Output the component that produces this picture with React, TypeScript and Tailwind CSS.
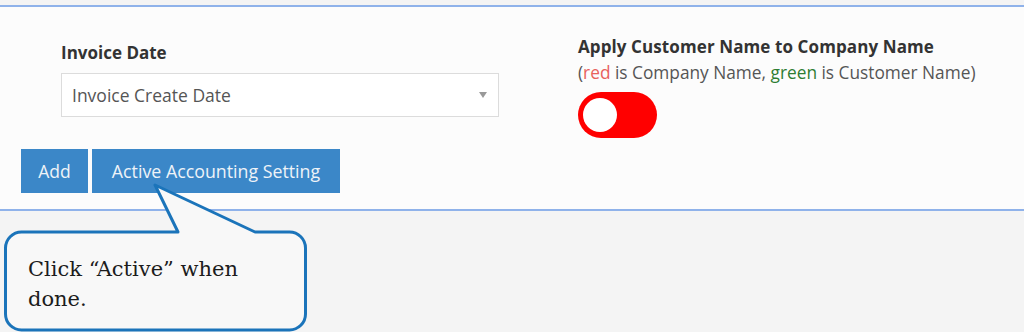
import React from 'react';

const ui = { fontFamily: '"Open Sans", "Noto Sans", Arial, sans-serif' };
const serif = { fontFamily: '"DejaVu Serif", "Liberation Serif", serif' };

const Callout: React.FC = () => (
  <div className="absolute left-0 top-[180px] h-[160px] w-[320px]">
    <svg width="320" height="160" viewBox="0 0 320 160" className="absolute inset-0">
      <path
        d="M 21.5 52 L 178 52 L 155 5 L 255 52 L 289.5 52 A 16 16 0 0 1 305.5 68 L 305.5 134 A 16 16 0 0 1 289.5 150 L 21.5 150 A 16 16 0 0 1 5.5 134 L 5.5 68 A 16 16 0 0 1 21.5 52 Z"
        fill="#f8f8f8"
        stroke="#1b74ba"
        strokeWidth="3"
        strokeLinejoin="round"
      />
    </svg>
    <p
      className="absolute left-[28px] top-[74px] w-[240px] text-[21px] leading-[30px] text-[#1c1c1c]"
      style={serif}
    >
      Click “Active” when done.
    </p>
  </div>
);

const App: React.FC = () => {
  return (
    <div className="relative h-[332px] w-[1024px] overflow-hidden bg-[#f4f4f4]" style={ui}>
      <div className="mt-[5px] border-y-2 border-[#8fb2ea] bg-[#fcfcfc] pb-[16px]">
        <div className="flex h-[131px] items-start">
          <div className="ml-[61px] mt-[36px] w-[438px]">
            <label className="block text-[17px] font-bold leading-[20px] text-[#333]">Invoice Date</label>
            <div className="mt-[10px] flex h-[44px] items-center justify-between border border-[#dcdcdc] bg-white pl-[10px] pr-[10px]">
              <span className="text-[17.5px] text-[#555]">Invoice Create Date</span>
              <span className="mr-[1px] h-0 w-0 border-x-[4px] border-t-[6px] border-x-transparent border-t-[#999]" />
            </div>
          </div>
          <div className="ml-[79px] mt-[29px]">
            <div className="text-[17px] font-bold leading-[22px] tracking-[0.1px] text-[#333]">Apply Customer Name to Company Name</div>
            <div className="mt-[4px] text-[17.3px] leading-[22px] text-[#555]">
              (<span className="text-[#e8615c]">red</span> is Company Name,{' '}
              <span className="text-[#2e7d32]">green</span> is Customer Name)
            </div>
            <button className="mt-[8px] flex h-[46px] w-[79px] items-center rounded-full bg-[#ff0000] pl-[5px]">
              <span className="block h-[34px] w-[34px] rounded-full bg-white" />
            </button>
          </div>
        </div>
        <div className="ml-[21px] mt-[11px] flex gap-[4px]">
          <button className="h-[44px] w-[67px] bg-[#3b87c8] text-[17.5px] text-[#eef3f8]">Add</button>
          <button className="h-[44px] w-[248px] bg-[#3b87c8] text-[17.8px] text-[#eef3f8]">Active Accounting Setting</button>
        </div>
      </div>
      <Callout />
    </div>
  );
};

export default App;
